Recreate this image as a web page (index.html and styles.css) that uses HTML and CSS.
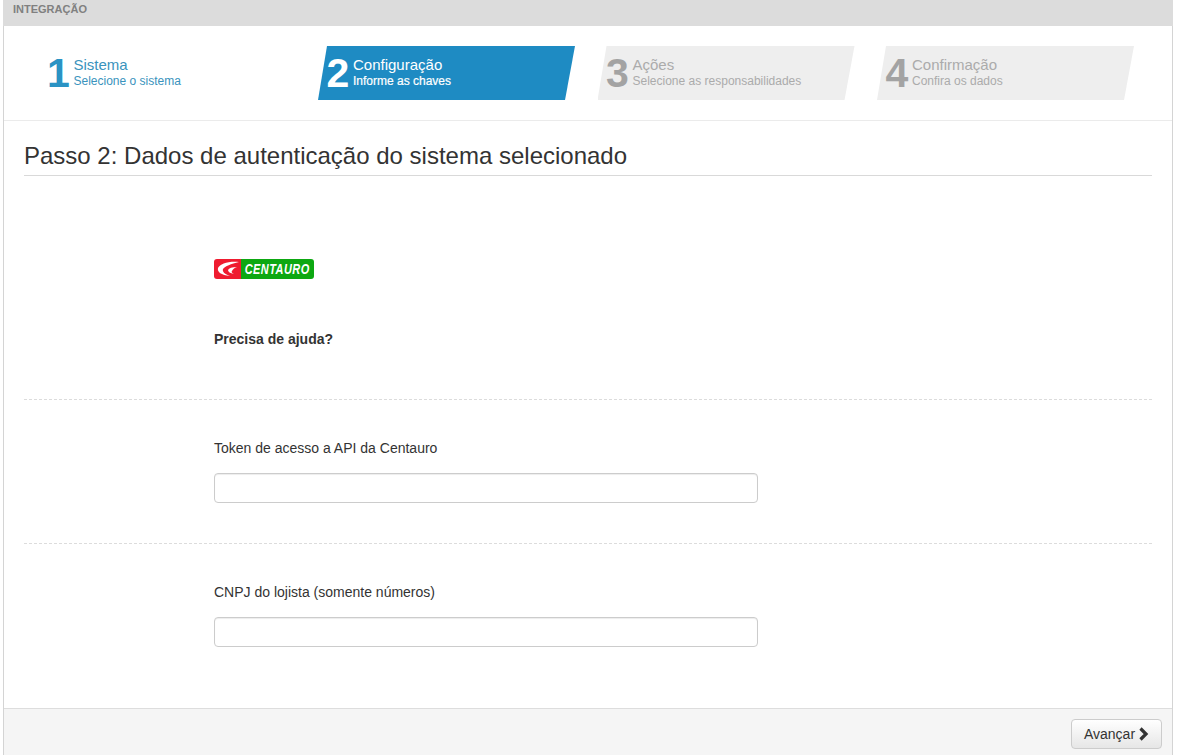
FILE: index.html
```html
<!DOCTYPE html>
<html lang="pt">
<head>
<meta charset="utf-8">
<title>Integração</title>
<link rel="stylesheet" href="styles.css">
</head>
<body>
<div class="panel">
  <header class="topbar">INTEGRAÇÃO</header>
  <nav class="steps">
    <div class="step done"><span class="num">1</span><div class="txt"><div class="t">Sistema</div><div class="s">Selecione o sistema</div></div></div>
    <div class="step active"><span class="num">2</span><div class="txt"><div class="t">Configuração</div><div class="s">Informe as chaves</div></div></div>
    <div class="step todo"><span class="num">3</span><div class="txt"><div class="t">Ações</div><div class="s">Selecione as responsabilidades</div></div></div>
    <div class="step todo"><span class="num">4</span><div class="txt"><div class="t">Confirmação</div><div class="s">Confira os dados</div></div></div>
  </nav>
  <main class="content">
    <h1 class="title">Passo 2: Dados de autenticação do sistema selecionado</h1>
    <section class="group intro">
      <div class="logo">
        <span class="logo-red"><svg width="27" height="20" viewBox="0 0 27 20"><path d="M25 3C14 2 6 5 4 9c-1 4 3 7 12 8-5-2-8-4-7-7 2-3 8-5 16-7z" fill="#fff"/><path d="M23 8c-5 0-8 1-9 3 0 2 2 3 6 4-2-1-3-2-2-3 1-2 2-3 5-4z" fill="#fff"/></svg></span>
        <span class="logo-green"><span class="logo-word">CENTAURO</span></span>
      </div>
      <p class="help">Precisa de ajuda?</p>
    </section>
    <section class="group">
      <label class="lbl" for="token">Token de acesso a API da Centauro</label>
      <input class="field" id="token" type="text">
    </section>
    <section class="group last">
      <label class="lbl" for="cnpj">CNPJ do lojista (somente números)</label>
      <input class="field" id="cnpj" type="text">
    </section>
  </main>
  <footer class="foot">
    <button class="btn" type="button">Avançar <svg class="chev" width="11" height="14" viewBox="0 0 11 14"><path d="M2.500 1.500L8 7l-5.500 5.500" fill="none" stroke="#333" stroke-width="3.200"/></svg></button>
  </footer>
</div>
</body>
</html>
```
FILE: styles.css
```css
* { box-sizing: border-box; }
html, body { margin: 0; height: 100%; background: #fff; }
body { font-family: "Liberation Sans", Arial, sans-serif; color: #333; font-size: 14px; overflow: hidden; }
.panel { margin-left: 3px; width: 1170px; height: 755px; border-left: 1px solid #d4d4d4; border-right: 1px solid #d4d4d4; display: flex; flex-direction: column; }
.topbar { height: 26px; margin: 0 -1px; background: #dcdcdc; color: #808080; font-size: 11px; font-weight: bold; padding: 3px 0 0 10px; line-height: 13px; flex: none; }
.steps { height: 95px; flex: none; border-bottom: 1px solid #ebebeb; padding: 20px 0 0 34.500px; display: flex; gap: 22.500px; }
.step { width: 257px; height: 54px; display: flex; align-items: center; padding-left: 9px; clip-path: polygon(9px 0, 100% 0, calc(100% - 10px) 100%, 0 100%); }
.num { font-size: 41px; font-weight: bold; line-height: 54px; width: 26px; flex: none; margin-left: -0.500px; margin-right: 0.500px; }
.t { font-size: 15px; line-height: 16px; margin-top: -1px; }
.s { font-size: 12px; line-height: 15px; margin-top: 1px; }
.done { color: #3a93bd; }
.done .num { color: #2a93c4; }
.active { background: #1e8bc3; color: #fff; }
.active .s { -webkit-text-stroke: 0.2px #fff; }
.todo { background: #eeeeee; color: #ababab; }
.todo .num { color: #a3a3a3; }
.content { flex: 1; padding: 0 20px; min-height: 0; }
.title { margin: 0; height: 55px; padding-top: 20px; font-size: 24px; font-weight: normal; line-height: 30px; color: #333; border-bottom: 1px solid #d9d9d9; }
.group { height: 144px; padding: 38px 0 0 190px; border-bottom: 1px dashed #dcdcdc; }
.group.intro { height: 224px; padding-top: 83px; }
.group.last { border-bottom: 0; }
.logo { display: flex; width: 100px; height: 20px; border-radius: 3px; overflow: hidden; }
.logo-red { width: 27px; background: #ef1c30; display: block; flex: none; }
.logo-red svg { display: block; }
.logo-green { flex: 1; background: #0da812; color: #fff; font-size: 11.500px; font-weight: bold; font-style: italic; line-height: 20px; letter-spacing: 0.500px; white-space: nowrap; text-align: center; }
.logo-word { display: inline-block; transform: scale(0.950, 1.350); }
.help { margin: 50px 0 0; font-weight: bold; font-size: 14px; line-height: 20px; color: #333; }
.lbl { display: block; font-size: 14px; line-height: 20px; color: #333; margin-bottom: 15px; }
.field { display: block; width: 544px; height: 30px; border: 1px solid #ccc; border-radius: 4px; background: #fff; box-shadow: inset 0 1px 1px rgba(0,0,0,.075); }
.foot { height: 47px; flex: none; background: #f5f5f5; border-top: 1px solid #dddddd; display: flex; justify-content: flex-end; align-items: flex-start; padding: 10px 10px 0 0; }
.btn { height: 30px; width: 91px; padding: 0; border: 1px solid #ccc; border-radius: 4px; background: linear-gradient(#fff, #e6e6e6); color: #333; font: 14px "Liberation Sans", Arial, sans-serif; display: flex; align-items: center; justify-content: center; gap: 3px; }
.chev { display: block; }
```
